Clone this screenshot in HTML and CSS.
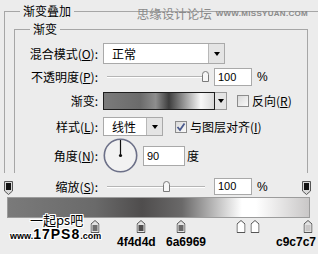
FILE: index.html
```html
<html lang="zh-CN">
<head>
    <meta charset="UTF-8">
    <meta name="viewport" content="width=device-width, initial-scale=1.0">
    <title>渐变叠加</title>
    <link rel="stylesheet" href="styles.css">
</head>
<body>
    <div class="site-mark"><span class="site-cn">思缘设计论坛</span><span class="site-url">WWW.MISSYUAN.COM</span></div>

    <fieldset class="outer">
        <legend>渐变叠加</legend>
        <fieldset class="inner">
            <legend>渐变</legend>

            <div class="row row-blend">
                <label class="lbl">混合模式(<u>O</u>):</label>
                <div class="select select-wide">
                    <span>正常</span>
                    <i class="drop"><b></b></i>
                </div>
            </div>

            <div class="row row-opacity">
                <label class="lbl">不透明度(<u>P</u>):</label>
                <div class="slider">
                    <svg class="thumb" style="left: 95px" width="7" height="11" viewBox="0 0 7 11"><path d="M0.5 3.5 Q0.5 0.5 3.5 0.5 Q6.5 0.5 6.5 3.5 V10.5 H0.5 Z" fill="#f6f6f6" stroke="#7a7a7a"/></svg>
                </div>
                <div class="num">100</div>
                <span class="unit">%</span>
            </div>

            <div class="row row-grad">
                <label class="lbl">渐变:</label>
                <div class="swatch"></div>
                <i class="drop drop-small"><b></b></i>
                <span class="check"></span>
                <span class="check-text">反向(<u>R</u>)</span>
            </div>

            <div class="row row-style">
                <label class="lbl">样式(<u>L</u>):</label>
                <div class="select select-small">
                    <span>线性</span>
                    <i class="drop"><b></b></i>
                </div>
                <span class="check checked">
                    <svg width="10" height="10" viewBox="0 0 10 10"><path d="M1.5 5 L4 8 L8.5 1.5" fill="none" stroke="#4a5a8e" stroke-width="1.8"/></svg>
                </span>
                <span class="check-text">与图层对齐(<u>I</u>)</span>
            </div>

            <div class="row row-angle">
                <label class="lbl">角度(<u>N</u>):</label>
                <div class="dial">
                    <svg width="35" height="35" viewBox="0 0 35 35">
                        <circle cx="17.5" cy="17.5" r="16.2" fill="#f2f2f2" stroke="#6c7088" stroke-width="1.6"/>
                        <line x1="17.5" y1="17.5" x2="17.5" y2="2" stroke="#111" stroke-width="1.2"/>
                        <circle cx="17.5" cy="17.5" r="1.6" fill="#111"/>
                    </svg>
                </div>
                <div class="num num-angle">90</div>
                <span class="unit-cn">度</span>
            </div>
        </fieldset>
    </fieldset>

    <div class="scale-row">
        <svg class="top-stop" width="9" height="14" viewBox="0 0 9 14"><path d="M0.5 0.5 H8.5 V10 L4.5 13.5 L0.5 10 Z" fill="#d8d8d8" stroke="#555"/><rect x="2" y="2" width="5" height="7" fill="#111"/></svg>
        <label class="lbl lbl-scale">缩放(<u>S</u>):</label>
        <div class="slider slider-scale">
            <svg class="thumb" style="left: 56px" width="7" height="11" viewBox="0 0 7 11"><path d="M0.5 3.5 Q0.5 0.5 3.5 0.5 Q6.5 0.5 6.5 3.5 V10.5 H0.5 Z" fill="#f6f6f6" stroke="#7a7a7a"/></svg>
        </div>
        <div class="num num-scale">100</div>
        <span class="unit">%</span>
        <svg class="top-stop top-stop-right" width="9" height="14" viewBox="0 0 9 14"><path d="M0.5 0.5 H8.5 V10 L4.5 13.5 L0.5 10 Z" fill="#d8d8d8" stroke="#555"/><rect x="2" y="2" width="5" height="7" fill="#111"/></svg>
    </div>

    <div class="grad-bar"></div>

    <div class="stops">
        <svg class="stop" style="left: 29.2%" width="9" height="13" viewBox="0 0 9 13"><path d="M4.5 0.5 L8.5 4 V12.5 H0.5 V4 Z" fill="#e2e2e2" stroke="#555"/><rect x="2" y="5" width="5" height="6" fill="#6e6e6e"/></svg>
        <svg class="stop" style="left: 44.5%" width="9" height="13" viewBox="0 0 9 13"><path d="M4.5 0.5 L8.5 4 V12.5 H0.5 V4 Z" fill="#e2e2e2" stroke="#555"/><rect x="2" y="5" width="5" height="6" fill="#4f4d4d"/></svg>
        <svg class="stop" style="left: 57.8%" width="9" height="13" viewBox="0 0 9 13"><path d="M4.5 0.5 L8.5 4 V12.5 H0.5 V4 Z" fill="#e2e2e2" stroke="#555"/><rect x="2" y="5" width="5" height="6" fill="#6a6969"/></svg>
        <svg class="stop" style="left: 77.7%" width="9" height="13" viewBox="0 0 9 13"><path d="M4.5 0.5 L8.5 4 V12.5 H0.5 V4 Z" fill="#fff" stroke="#555"/></svg>
        <svg class="stop" style="left: 82.4%" width="9" height="13" viewBox="0 0 9 13"><path d="M4.5 0.5 L8.5 4 V12.5 H0.5 V4 Z" fill="#fff" stroke="#555"/></svg>
        <svg class="stop" style="left: 100%" width="9" height="13" viewBox="0 0 9 13"><path d="M4.5 0.5 L8.5 4 V12.5 H0.5 V4 Z" fill="#e2e2e2" stroke="#555"/><rect x="2" y="5" width="5" height="6" fill="#c9c7c7"/></svg>
    </div>

    <div class="codes">
        <span style="left: 117px">4f4d4d</span>
        <span style="left: 166px">6a6969</span>
        <span style="left: 276px">c9c7c7</span>
    </div>

    <div class="ps-mark">
        <div class="ps-cn">一起ps吧</div>
        <div class="ps-url"><span class="sm">www.</span><span class="big">17PS8</span><span class="sm">.com</span></div>
    </div>
</body>
</html>
```

FILE: styles.css
```css
* {
    margin: 0;
    padding: 0;
    box-sizing: border-box;
}

body {
    width: 318px;
    height: 254px;
    overflow: hidden;
    position: relative;
    background: #ececec;
    color: #000;
    font-family: "Noto Sans CJK SC", sans-serif;
    font-size: 12px;
    line-height: 14px;
}

u {
    text-decoration: underline;
}

/* 外框 渐变叠加 */
.outer {
    min-width: 0;
    margin: 4px 0 0 4px;
    padding: 0 0 0 9px;
    border: 1px solid #a6a6a6;
    border-right: 0;
    border-bottom: 0;
}

.outer > legend {
    margin-left: 6px;
    padding: 0 3px;
    line-height: 14px;
}

.inner {
    min-width: 0;
    width: 294px;
    margin-top: 4px;
    padding: 0;
    border: 1px solid #a6a6a6;
    border-bottom: 0;
}

.inner > legend {
    margin-left: 15px;
    padding: 0 3px;
    line-height: 14px;
}

.row {
    display: flex;
    align-items: center;
}

.lbl {
    width: 83px;
    flex-shrink: 0;
    margin-right: 5px;
    text-align: right;
    white-space: nowrap;
}

.row-blend {
    height: 21px;
    margin-top: 7px;
}

.row-opacity {
    height: 18px;
    margin-top: 4px;
}

.row-grad {
    height: 18px;
    margin-top: 6px;
}

.row-style {
    height: 19px;
    margin-top: 7px;
}

.row-angle {
    height: 35px;
    margin-top: 2px;
}

/* 下拉框 */
.select {
    display: flex;
    align-items: center;
    height: 100%;
    padding-left: 8px;
    background: #fff;
    border: 1px solid #a9a9a9;
}

.select-wide {
    width: 122px;
}

.select-small {
    width: 60px;
}

.drop {
    display: flex;
    align-items: center;
    justify-content: center;
    align-self: stretch;
    width: 16px;
    margin-left: auto;
    background: #e4e4e4;
    border-left: 1px solid #b8b8b8;
}

.drop b {
    width: 0;
    height: 0;
    border-left: 3px solid transparent;
    border-right: 3px solid transparent;
    border-top: 4px solid #000;
}

.drop-small {
    width: 12px;
    height: 18px;
    margin-left: 0;
    border: 1px solid #999;
    border-left: 0;
}

/* 滑块 */
.slider {
    position: relative;
    width: 102px;
    height: 100%;
    margin-left: 4px;
}

.slider::before {
    content: "";
    position: absolute;
    left: 0;
    right: 0;
    top: 8px;
    height: 1px;
    background: #b5b5b5;
    box-shadow: 0 1px 0 #fff;
}

.thumb {
    position: absolute;
    top: 3px;
}

.num {
    width: 38px;
    height: 18px;
    margin-left: 5px;
    padding-left: 3px;
    background: #fff;
    border: 1px solid #a9a9a9;
    font-family: "Liberation Sans", Arial, sans-serif;
    font-size: 11px;
    line-height: 16px;
}

.unit {
    margin-left: 5px;
    font-family: "Liberation Sans", Arial, sans-serif;
    font-size: 12px;
}

/* 渐变预览 */
.swatch {
    width: 112px;
    height: 18px;
    border: 1px solid #1e1e1e;
    background: linear-gradient(to right, #7b7b7b 0%, #6b6b6b 33%, #8e8e8e 47%, #3e3e3e 59%, #f8f8f8 88%, #d9d9d9 100%);
}

.check {
    display: flex;
    align-items: center;
    justify-content: center;
    width: 12px;
    height: 12px;
    margin-left: 10px;
    border: 1px solid #8c8c8c;
    background: linear-gradient(135deg, #d9d9d9, #fafafa);
}

.row-style .check {
    margin-left: 12px;
}

.check-text {
    margin-left: 3px;
    white-space: nowrap;
}

/* 角度 */
.dial {
    width: 35px;
    height: 35px;
}

.dial svg {
    display: block;
}

.num-angle {
    width: 42px;
    height: 20px;
    line-height: 18px;
}

.unit-cn {
    margin-left: 2px;
}

/* 缩放 + 不透明度色标 */
.scale-row {
    display: flex;
    align-items: center;
    height: 17px;
    margin-top: 5px;
}

.top-stop {
    align-self: flex-end;
    flex-shrink: 0;
    margin-left: 4px;
}

.top-stop-right {
    margin-left: auto;
    margin-right: 7px;
}

.lbl-scale {
    width: 85px;
    margin-right: 0;
}

.slider-scale {
    width: 98px;
    margin-left: 9px;
}

.num-scale {
    height: 17px;
    margin-left: 9px;
    line-height: 15px;
}

/* 渐变编辑条 */
.grad-bar {
    width: 303px;
    height: 21px;
    margin: 2px 0 0 7px;
    border: 1px solid #9c9c9c;
    background: linear-gradient(to right, #7a7a7a 0%, #6a6a6a 29%, #4f4d4d 44.5%, #6a6969 57.8%, #ffffff 77.7%, #ffffff 82.4%, #c9c7c7 100%);
}

.stops {
    position: relative;
    width: 301px;
    height: 13px;
    margin: 2px 0 0 7px;
}

.stop {
    position: absolute;
    top: 0;
    transform: translateX(-50%);
}

.codes {
    position: relative;
    height: 11px;
    margin-top: 4px;
}

.codes span {
    position: absolute;
    top: 0;
    font-family: "Liberation Sans", Arial, sans-serif;
    font-size: 12px;
    font-weight: bold;
    line-height: 11px;
}

/* 水印 */
.site-mark {
    position: absolute;
    top: 6px;
    right: 10px;
    display: flex;
    align-items: center;
    gap: 4px;
    color: #8a8a8a;
    line-height: 16px;
    white-space: nowrap;
}

.site-cn {
    font-size: 12.5px;
}

.site-url {
    font-family: "Liberation Sans", Arial, sans-serif;
    font-size: 8px;
    font-weight: bold;
    letter-spacing: 0.3px;
}

.ps-mark {
    position: absolute;
    left: 10px;
    top: 212px;
    text-shadow: 1px 0 #fff, -1px 0 #fff, 0 1px #fff, 0 -1px #fff, 1px 1px #fff, -1px -1px #fff, 1px -1px #fff, -1px 1px #fff;
}

.ps-cn {
    margin-left: 20px;
    font-size: 13px;
    line-height: 15px;
}

.ps-url {
    margin-top: 1px;
    font-family: "Liberation Sans", Arial, sans-serif;
    font-weight: bold;
    line-height: 12px;
    white-space: nowrap;
}

.ps-url .sm {
    font-size: 9px;
}

.ps-url .big {
    font-size: 14px;
    letter-spacing: 1px;
}
```
